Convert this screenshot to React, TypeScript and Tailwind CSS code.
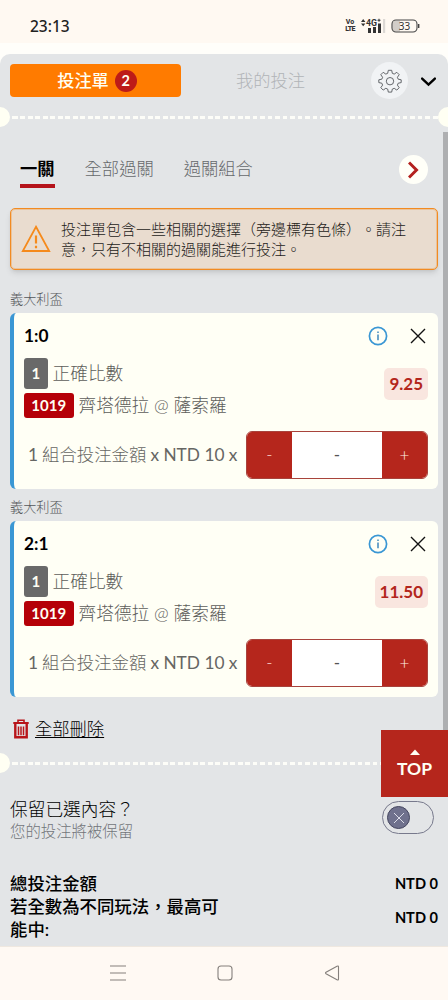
import { ReactNode } from "react";

interface BetProps {
  league: string;
  score: string;
  odds: string;
}

const bets: BetProps[] = [
  { league: "義大利盃", score: "1:0", odds: "9.25" },
  { league: "義大利盃", score: "2:1", odds: "11.50" },
];

const GearIcon = () => (
  <svg width="24" height="24" viewBox="0 0 24 24" fill="none" stroke="#55585c" strokeWidth="0.9" strokeLinejoin="round">
    <path d="M10.3 1.3h3.4l.6 3 1.9.8 2.6-1.8 2.4 2.4-1.8 2.6.8 1.9 3 .6v2.8l-3 .6-.8 1.9 1.8 2.6-2.4 2.4-2.6-1.8-1.9.8-.6 3h-3.4l-.6-3-1.9-.8-2.6 1.8-2.4-2.4 1.8-2.6-.8-1.9-3-.6v-2.8l3-.6.8-1.9-1.8-2.6 2.4-2.4 2.6 1.8 1.9-.8z" />
    <circle cx="12" cy="12.2" r="3.7" />
  </svg>
);

const TrashIcon = () => (
  <svg width="16" height="20" viewBox="0 0 16 20" fill="none" stroke="#b8141a">
    <path d="M0.3 4h15.4" strokeWidth="2" />
    <path d="M5 3.5V1.2h6v2.3" strokeWidth="1.6" />
    <path d="M2.3 5v13.2h11.4V5" strokeWidth="2.4" />
    <path d="M5.5 7.5v8.8M8 7.5v8.8M10.5 7.5v8.8" strokeWidth="1.5" />
  </svg>
);

const StatusBar = () => (
  <div className="flex h-[54px] justify-between bg-[#fffefa]">
    <div className="flex h-[43px] w-full items-start justify-between bg-[#fff9f2] pl-[30px] pr-[28px] pt-[16px]">
      <span className="font-['Noto_Sans'] text-[15.5px] leading-[20px] font-medium text-[#222]">23:13</span>
      <div className="flex h-[20px] items-center text-[#333]">
        <div className="flex w-[10px] flex-col items-center font-['Roboto'] text-[7px] leading-[7px] font-extrabold">
          <span>Vo</span>
          <span className="tracking-[-0.08em]">LTE</span>
        </div>
        <svg className="ml-[5px]" width="26" height="16" viewBox="0 0 26 16" fill="#333">
          <path d="M1 4l2.2-3 2.2 3zM1 5.5h4.4L3.2 8.2z" />
          <text x="6" y="7.8" fontSize="9" fontWeight="700" fontFamily="Roboto" textLength="11" lengthAdjust="spacingAndGlyphs">4G</text>
          <path d="M17.5 1.8h3v1h-3zM18.5 .8h1v3h-1zM8 10h3v5H8zM13 9h3v6h-3zM18 5.5h3V15h-3z" />
          <path d="M23 1h2.2v14H23z" fill="#dcd8d4" />
        </svg>
        <svg className="ml-[5px]" width="29" height="14" viewBox="0 0 29 14" fill="none">
          <path d="M5 1.5h4v11H5a3.5 3.5 0 0 1-3.5-3.5V5A3.5 3.5 0 0 1 5 1.5z" fill="#d2cdc8" />
          <rect x="1" y="1" width="25" height="12" rx="4" stroke="#444" strokeWidth="1.1" />
          <path d="M27.7 5v4" stroke="#444" strokeWidth="1.4" />
          <text x="13.5" y="10.6" fontSize="10" fill="#333" textAnchor="middle" fontFamily="Noto Sans">33</text>
        </svg>
      </div>
    </div>
  </div>
);

const Divider = () => (
  <div className="flex h-[20px] items-center">
    <div className="h-[20px] w-[10px] rounded-r-full bg-[#fffff3]" />
    <div className="mt-px h-[3px] flex-1 bg-[repeating-linear-gradient(90deg,transparent_0_2.5px,#fdfdf8_2.5px_7.5px)]" />
    <div className="h-[20px] w-[10px] rounded-l-full bg-[#fffff3]" />
  </div>
);

const Tag = ({ children, className }: { children: ReactNode; className: string }) => (
  <span className={`flex items-center justify-center rounded-[3px] text-[15px] font-bold text-[#fffff3] ${className}`}>
    {children}
  </span>
);

const BetCard = ({ league, score, odds }: BetProps) => (
  <div className="h-[208px]">
    <p className="pt-[2px] text-[13.2px] leading-[20px] font-light text-[#55585b]">{league}</p>
    <div className="mt-[4px] h-[176px] rounded-[6px] border-l-4 border-[#3a97d4] bg-[#fffff5] pl-[10px] pr-[10px] pt-[11px]">
      <div className="flex h-[24px] items-center justify-between">
        <span className="text-[17.3px] font-bold text-black">{score}</span>
        <div className="flex items-center gap-[22px] pr-[2px]">
          <svg width="20" height="20" viewBox="0 0 20 20" fill="none">
            <circle cx="10" cy="10" r="8.6" stroke="#3a97d4" strokeWidth="1.7" />
            <path d="M10 8.5v5.7M10 5.6v1.5" stroke="#4a8fc0" strokeWidth="1.6" />
          </svg>
          <svg width="16" height="16" viewBox="0 0 16 16" stroke="#111" strokeWidth="1.4">
            <path d="M1 1l14 14M15 1L1 15" />
          </svg>
        </div>
      </div>
      <div className="flex items-start justify-between pt-[10px]">
        <div className="flex flex-col gap-[4px]">
          <div className="flex items-center gap-[5px]">
            <Tag className="h-[31px] w-[23.5px] bg-[#696969]">1</Tag>
            <span className="text-[17.7px] leading-[24px] font-light text-[#5d5d5a]">正確比數</span>
          </div>
          <div className="flex items-center gap-[5px]">
            <Tag className="h-[25px] w-[49.5px] bg-[#b50008]">1019</Tag>
            <span className="text-[17.7px] leading-[24px] font-light text-[#5d5d5a]">齊塔德拉 @ 薩索羅</span>
          </div>
        </div>
        <span className="mt-[10px] flex h-[32px] items-center rounded-[5px] bg-[#f9e6df] px-[5px] text-[17px] font-bold text-[#b3261c]">
          {odds}
        </span>
      </div>
      <div className="mt-[13px] flex items-center justify-between">
        <span className="flex gap-[4px] pl-[4px] text-[17.3px] leading-[24px] whitespace-nowrap text-[#666663]">
          1<span className="text-[17.4px] font-light">組合投注金額</span>
          <span>x NTD 10 x</span>
        </span>
        <div className="flex h-[48px] w-[182px] overflow-hidden rounded-[6px] border border-[#a8433c] bg-white text-[17px]">
          <button className="w-[45px] bg-[#b5261c] font-light text-[#ffdcd5]">-</button>
          <span className="flex flex-1 items-center justify-center text-[#555]">-</span>
          <button className="w-[45px] bg-[#b5261c] font-light text-[#ffeee8]">+</button>
        </div>
      </div>
    </div>
  </div>
);

export default function App() {
  return (
    <div
      lang="zh-TW"
      className="relative flex h-[1000px] w-[448px] flex-col overflow-hidden bg-[#fffefa] font-['Lato','Noto_Sans_CJK_TC',sans-serif] [text-spacing-trim:space-all]"
    >
      <StatusBar />
      <main className="h-[892px] overflow-hidden rounded-t-[10px] bg-[#e3e5e7]">
        <header className="flex h-[53px] items-center pl-[10px] pr-[12px]">
          <div className="flex h-[33px] w-[171px] items-center justify-center gap-[6px] rounded-[4px] bg-[#ff7b00] pl-[3px] text-[17.2px] font-medium text-[#fffff3]">
            投注單
            <span className="flex size-[22px] items-center justify-center rounded-full bg-[#bd1b18] text-[14.5px] font-bold">2</span>
          </div>
          <span className="w-[179px] text-center text-[17.3px] font-light text-[#b1b4b7]">我的投注</span>
          <div className="ml-[11px] flex size-[37px] items-center justify-center rounded-full bg-[#f1f3f5]">
            <GearIcon />
          </div>
          <svg className="mt-[2px] ml-auto" width="15" height="10" viewBox="0 0 16 10" fill="none" stroke="#000" strokeWidth="2.6">
            <path d="M1.2 1.3L8 7.7l6.8-6.4" strokeLinecap="round" />
          </svg>
        </header>
        <Divider />
        <nav className="flex h-[81px] items-start gap-[30px] pl-[20px] pr-[20px] pt-[28px] text-[17.3px] leading-[26px] font-light text-[#66696c]">
          <span className="h-[33px] border-b-4 border-[#b5131b] pt-px font-bold text-black">一關</span>
          <span className="pt-px">全部過關</span>
          <span className="pt-px">過關組合</span>
          <span className="ml-auto flex size-[29px] items-center justify-center rounded-full bg-[#fffff8]">
            <svg width="12" height="18" viewBox="0 0 12 18" fill="none" stroke="#b3201d" strokeWidth="3">
              <path d="M1 1.5L8.5 9 1 16.5" />
            </svg>
          </span>
        </nav>
        <div className="mx-[10px] flex h-[62px] items-center rounded-[5px] border border-[#f28b22] bg-[#e9dccf] pl-[10px] shadow-md ring-1 ring-[#f28b22]/30 ring-inset">
          <svg className="shrink-0" width="30" height="28" viewBox="0 0 30 28" fill="none" stroke="#f58a1c" strokeWidth="1.8">
            <path d="M15 1.8L28.2 26H1.8z" />
            <path d="M15 10.5v8M15 20.7v2.6" strokeWidth="2.2" />
          </svg>
          <p className="ml-[10px] text-[15px] leading-[20px] font-light text-[#1d1b19]">
            投注單包含一些相關的選擇（旁邊標有色條）。請注
            <br />
            意，只有不相關的過關能進行投注。
          </p>
        </div>
        <section className="px-[10px] pt-[17px]">
          {bets.map((bet) => (
            <BetCard key={bet.score} {...bet} />
          ))}
        </section>
        <div className="flex h-[50px] items-center gap-[6px] pl-[13px] pt-[2px] text-[17.3px] font-light text-black">
          <TrashIcon />
          <span className="underline underline-offset-[2px]">全部刪除</span>
        </div>
        <Divider />
        <section className="flex h-[98px] items-start justify-between pl-[10px] pr-[14px] pt-[25px]">
          <div>
            <p className="text-[17.7px] leading-[23px] font-light text-black">保留已選內容？</p>
            <p className="text-[15.4px] leading-[20px] font-light text-[#72757a]">您的投注將被保留</p>
          </div>
          <div className="mt-[3px] flex h-[33px] w-[52px] items-center rounded-full border-[1.3px] border-[#77798c] pl-[4px]">
            <span className="flex size-[23px] items-center justify-center rounded-full border-[1.5px] border-[#45465f] bg-[#6f718d]">
              <svg width="12" height="12" viewBox="0 0 12 12" stroke="#dcdde8" strokeWidth="1">
                <path d="M1 1l10 10M11 1L1 11" />
              </svg>
            </span>
          </div>
        </section>
        <section className="px-[10px] pt-px text-[17.4px] leading-[23px] font-medium text-black">
          <div className="flex items-center justify-between">
            <span>總投注金額</span>
            <span className="-mt-px text-[14.6px] font-bold">NTD 0</span>
          </div>
          <div className="flex items-center justify-between">
            <span className="w-[212px]">若全數為不同玩法，最高可能中:</span>
            <span className="-mt-px text-[14.6px] font-bold">NTD 0</span>
          </div>
        </section>
      </main>
      <footer className="flex h-[54px] items-center border-t border-[#efe8e0] bg-[#fff9f3] pb-[2px] pl-[109px]">
        <svg width="232" height="18" viewBox="0 0 232 18" fill="none" stroke="#85807c" strokeWidth="1.1">
          <path d="M1 2h16M1 9h16M1 16h16" />
          <rect x="109" y="2" width="14" height="14" rx="3" />
          <path d="M229.5 3v12q0 1.5-1.5.7l-11-6q-1-.7 0-1.4l11-6q1.5-.8 1.5.7z" />
        </svg>
      </footer>
      <div className="absolute right-0 top-[132px] h-[598px] w-[5px] bg-[#aeafb1]" />
      <button className="absolute right-0 top-[730px] flex size-[67px] flex-col items-center bg-[#b5261c] pt-[19px] text-[17.5px] leading-[28px] font-bold text-[#fffff3]">
        <svg width="10" height="6" viewBox="0 0 10 6" fill="#fffff3">
          <path d="M0 6l5-5.5L10 6z" />
        </svg>
        TOP
      </button>
    </div>
  );
}
